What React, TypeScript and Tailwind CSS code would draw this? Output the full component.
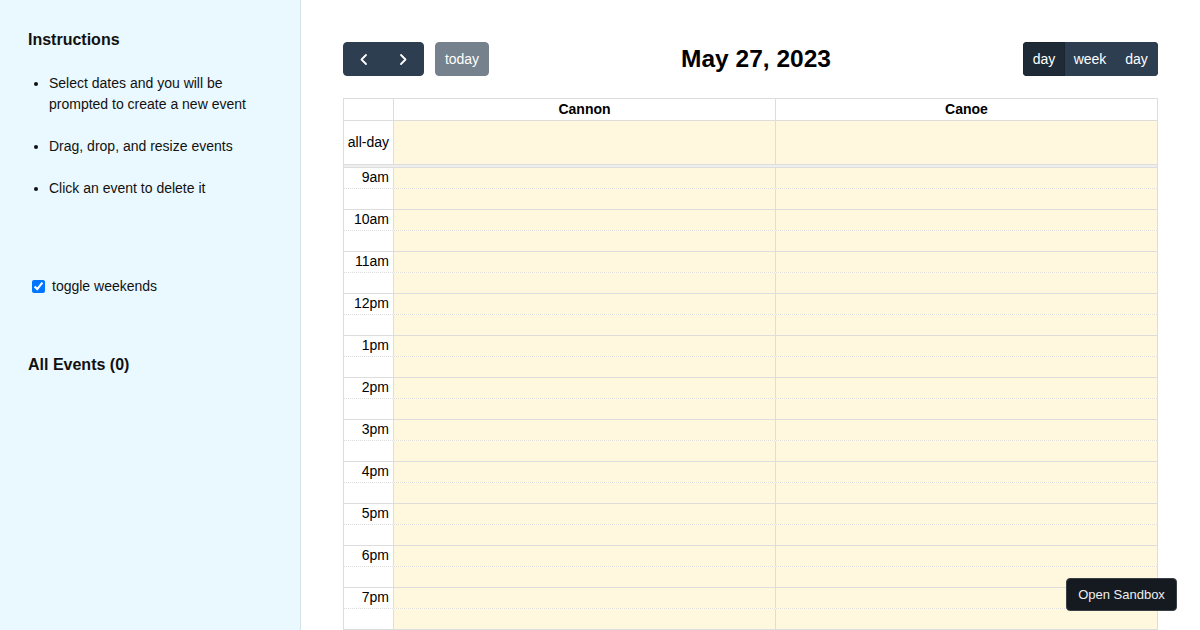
const HOURS = ["9am", "10am", "11am", "12pm", "1pm", "2pm", "3pm", "4pm", "5pm", "6pm", "7pm"];
const RESOURCES = ["Cannon", "Canoe"];

function Chevron({ dir }: { dir: "left" | "right" }) {
  return (
    <svg width="21" height="21" viewBox="0 0 21 21" fill="none">
      <path
        d={dir === "left" ? "M13 6 L8.5 10.5 L13 15" : "M8 6 L12.5 10.5 L8 15"}
        stroke="white"
        strokeWidth="1.8"
        strokeLinecap="round"
        strokeLinejoin="round"
      />
    </svg>
  );
}

function Sidebar() {
  return (
    <div className="w-[301px] shrink-0 border-r border-[#d3e2e8] bg-[#eaf9ff] text-[14px] leading-[1.5] text-[#111]">
      <div className="p-7">
        <h2 className="text-[16px] font-bold">Instructions</h2>
        <ul className="list-disc pl-[21px]">
          <li className="my-[21px]">Select dates and you will be prompted to create a new event</li>
          <li className="my-[21px]">Drag, drop, and resize events</li>
          <li className="my-[21px]">Click an event to delete it</li>
        </ul>
      </div>
      <div className="p-7">
        <label className="flex items-center">
          <input type="checkbox" defaultChecked className="ml-1 mr-[7px] h-[13px] w-[13px]" />
          toggle weekends
        </label>
      </div>
      <div className="p-7">
        <h2 className="text-[16px] font-bold">All Events (0)</h2>
      </div>
    </div>
  );
}

function Toolbar() {
  return (
    <div className="mb-[22px] flex h-[34px] items-center justify-between">
      <div className="flex items-center">
        <div className="flex h-[34px] w-[81px] overflow-hidden rounded-[4px] border border-[#2c3e50] bg-[#2c3e50]">
          <button className="flex flex-1 items-center justify-center">
            <Chevron dir="left" />
          </button>
          <button className="flex flex-1 items-center justify-center">
            <Chevron dir="right" />
          </button>
        </div>
        <button className="ml-[11px] h-[34px] w-[54px] rounded-[4px] border border-[#2c3e50] bg-[#2c3e50] text-[14px] text-white opacity-65">
          today
        </button>
      </div>
      <h2 className="text-[24.5px] font-bold leading-[34px] text-black">May 27, 2023</h2>
      <div className="flex h-[34px] overflow-hidden rounded-[4px] text-[14px] text-white">
        <button className="w-[42px] border border-[#1a252f] bg-[#1e2b37]">day</button>
        <button className="w-[50px] border border-[#2c3e50] bg-[#2c3e50]">week</button>
        <button className="w-[43px] border border-[#2c3e50] bg-[#2c3e50]">day</button>
      </div>
    </div>
  );
}

function Calendar() {
  return (
    <div className="border border-[#ddd] text-[14px] text-black">
      {/* resource header */}
      <div className="flex h-[22px] border-b border-[#ddd]">
        <div className="w-[50px] shrink-0 border-r border-[#ddd]" />
        {RESOURCES.map((r, i) => (
          <div
            key={r}
            className={`flex-1 text-center font-bold leading-[21px] ${i === 0 ? "border-r border-[#ddd]" : ""}`}
          >
            {r}
          </div>
        ))}
      </div>

      {/* all-day */}
      <div className="flex h-[44px] border-b border-[#ddd]">
        <div className="flex w-[50px] shrink-0 items-center justify-end whitespace-nowrap border-r border-[#ddd] pr-1">
          all-day
        </div>
        <div className="flex-1 border-r border-[#ddd] bg-[#fff8de]" />
        <div className="flex-1 bg-[#fff8de]" />
      </div>

      <div className="h-[3px] border-b border-[#ddd] bg-[#eee]" />

      {/* time slots */}
      {HOURS.map((h) => (
        <div key={h}>
          <div className="flex h-[21px] border-b border-dotted border-[#ddd]">
            <div className="w-[50px] shrink-0 border-r border-solid border-[#ddd] pr-1 text-right leading-[19px]">{h}</div>
            <div className="flex-1 border-r border-solid border-[#ddd] bg-[#fff8de]" />
            <div className="flex-1 bg-[#fff8de]" />
          </div>
          <div className="flex h-[21px] border-b border-[#ddd]">
            <div className="w-[50px] shrink-0 border-r border-[#ddd]" />
            <div className="flex-1 border-r border-[#ddd] bg-[#fff8de]" />
            <div className="flex-1 bg-[#fff8de]" />
          </div>
        </div>
      ))}
    </div>
  );
}

export default function App() {
  return (
    <div className="relative flex h-[630px] overflow-hidden bg-white font-['Liberation_Sans',Arial,sans-serif]">
      <Sidebar />
      <div className="flex-1 p-[42px]">
        <Toolbar />
        <Calendar />
      </div>

      <button className="absolute bottom-[19px] right-[23px] h-[33px] w-[111px] rounded-[4px] border border-[#3a3f46] bg-[#151a21] text-[13px] text-[#eee]">
        Open Sandbox
      </button>
    </div>
  );
}
